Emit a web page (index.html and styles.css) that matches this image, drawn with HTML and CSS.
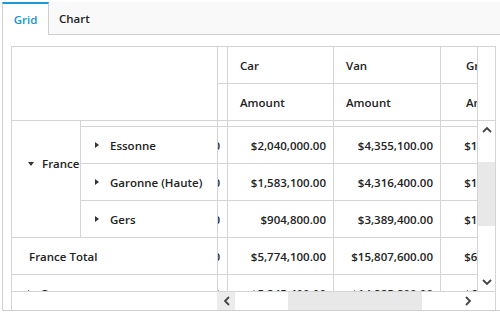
FILE: index.html
```html
<!DOCTYPE html>
<html lang="en">
<head>
    <meta charset="UTF-8">
    <meta name="viewport" content="width=device-width, initial-scale=1.0">
    <title>Pivot Grid</title>
    <link rel="stylesheet" href="styles.css">
</head>
<body>

<div class="tabbar">
    <div class="tab active">Grid</div>
    <div class="tab">Chart</div>
</div>

<div class="panel">
    <div class="pivot">

        <div class="head">
            <div class="corner"></div>
            <div class="view">
                <div class="cols">
                    <div class="hcell">Bus</div>
                    <div class="hcell">Car</div>
                    <div class="hcell">Van</div>
                    <div class="hcell total">Grand Total</div>
                    <div class="hcell">Amount</div>
                    <div class="hcell">Amount</div>
                    <div class="hcell">Amount</div>
                    <div class="hcell total">Amount</div>
                </div>
            </div>
            <div class="vhead"></div>
        </div>

        <div class="body">
            <div class="frozen">
                <div class="rows">
                    <div class="rh country span4"><span class="tri-down"></span>France</div>
                    <div class="rh state"><span class="tri-right"></span>Charente</div>
                    <div class="rh state"><span class="tri-right"></span>Essonne</div>
                    <div class="rh state"><span class="tri-right"></span>Garonne (Haute)</div>
                    <div class="rh state"><span class="tri-right"></span>Gers</div>
                    <div class="rh wide total-row">France Total</div>
                    <div class="rh wide country"><span class="tri-right"></span>Germany</div>
                </div>
            </div>
            <div class="view">
                <div class="cols values">
                    <div class="vc">$1,204,300.00</div>
                    <div class="vc">$1,865,200.00</div>
                    <div class="vc">$3,746,700.00</div>
                    <div class="vc">$11,816,200.00</div>

                    <div class="vc">$1,912,800.00</div>
                    <div class="vc">$2,040,000.00</div>
                    <div class="vc">$4,355,100.00</div>
                    <div class="vc">$13,307,900.00</div>

                    <div class="vc">$1,475,500.00</div>
                    <div class="vc">$1,583,100.00</div>
                    <div class="vc">$4,316,400.00</div>
                    <div class="vc">$14,375,000.00</div>

                    <div class="vc">$1,126,900.00</div>
                    <div class="vc">$904,800.00</div>
                    <div class="vc">$3,389,400.00</div>
                    <div class="vc">$10,421,100.00</div>

                    <div class="vc">$5,719,500.00</div>
                    <div class="vc">$5,774,100.00</div>
                    <div class="vc">$15,807,600.00</div>
                    <div class="vc">$67,920,200.00</div>

                    <div class="vc">$5,102,600.00</div>
                    <div class="vc">$5,245,400.00</div>
                    <div class="vc">$14,885,800.00</div>
                    <div class="vc">$64,330,100.00</div>
                </div>
            </div>
            <div class="vscroll">
                <div class="sb-btn up">
                    <svg width="10" height="7" viewBox="0 0 10 7"><polyline points="1,6 5,2 9,6" fill="none" stroke="#444" stroke-width="1.8"/></svg>
                </div>
                <div class="sb-track">
                    <div class="vthumb"></div>
                </div>
                <div class="sb-btn down">
                    <svg width="10" height="7" viewBox="0 0 10 7"><polyline points="1,1 5,5 9,1" fill="none" stroke="#444" stroke-width="1.8"/></svg>
                </div>
            </div>
        </div>

        <div class="foot">
            <div class="fblank"></div>
            <div class="hscroll">
                <div class="sb-btn left">
                    <svg width="7" height="10" viewBox="0 0 7 10"><polyline points="6,1 2,5 6,9" fill="none" stroke="#444" stroke-width="1.8"/></svg>
                </div>
                <div class="sb-track">
                    <div class="hthumb"></div>
                </div>
                <div class="sb-btn right">
                    <svg width="7" height="10" viewBox="0 0 7 10"><polyline points="1,1 5,5 1,9" fill="none" stroke="#444" stroke-width="1.8"/></svg>
                </div>
            </div>
            <div class="fcorner"></div>
        </div>

    </div>
</div>

</body>
</html>
```

FILE: styles.css
```css
* {
    box-sizing: border-box;
}

body {
    margin: 0;
    width: 500px;
    height: 315px;
    overflow: hidden;
    background-color: #fff;
    font-family: 'Open Sans', 'Noto Sans', sans-serif;
    font-size: 11.5px;
    font-weight: 600;
    color: #222;
}

/* tabs */
.tabbar {
    display: flex;
    align-items: flex-start;
    width: 510px;
    height: 33px;
    margin: 2px 0 0 2px;
    background-color: #f9f9f9;
    border-bottom: 1px solid #cfcfcf;
}

.tab {
    height: 32px;
    padding: 0 10px;
    display: flex;
    align-items: center;
}

.tab.active {
    width: 47px;
    height: 33px;
    justify-content: center;
    padding: 0;
    background-color: #fff;
    color: #1b8fd4;
    border-top: 2px solid #1a9ad6;
    border-left: 1px solid #cfcfcf;
    border-right: 1px solid #cfcfcf;
}

.panel {
    width: 510px;
    height: 276px;
    margin-left: 2px;
    padding: 11px 0 0 8px;
    border-left: 1px solid #cfcfcf;
    border-bottom: 1px solid #cfcfcf;
}

/* pivot grid */
.pivot {
    width: 485px;
    height: 264px;
    border: 1px solid #d4d4d4;
    border-bottom: none;
}

.head {
    display: flex;
    height: 74px;
}

.corner {
    width: 206px;
    border-right: 1px solid #d4d4d4;
    border-bottom: 1px solid #d4d4d4;
}

.view {
    width: 259px;
    overflow: hidden;
}

.cols {
    display: grid;
    grid-template-columns: 106px 106px 107px 113px;
    grid-auto-rows: 37px;
    width: 432px;
    margin-left: -96px;
}

.hcell {
    display: flex;
    align-items: center;
    padding-left: 12px;
    white-space: nowrap;
    overflow: hidden;
    border-right: 1px solid #d4d4d4;
    border-bottom: 1px solid #d4d4d4;
}

.hcell.total {
    padding-left: 25px;
}

.vhead {
    width: 18px;
    border-left: 1px solid #d4d4d4;
    border-bottom: 1px solid #d4d4d4;
}

.body {
    display: flex;
    height: 170px;
}

.frozen {
    width: 206px;
    overflow: hidden;
    border-right: 1px solid #d4d4d4;
}

.rows {
    display: grid;
    grid-template-columns: 69px 136px;
    grid-auto-rows: 37px;
    margin-top: -31px;
}

.rh {
    display: flex;
    align-items: center;
    white-space: nowrap;
    border-bottom: 1px solid #d4d4d4;
}

.rh.country {
    padding-left: 16px;
    gap: 8px;
}

.rh.span4 {
    grid-row: span 4;
    border-right: 1px solid #d4d4d4;
}

.rh.state {
    padding-left: 14px;
    gap: 11px;
}

.rh.wide {
    grid-column: span 2;
}

.rh.total-row {
    padding-left: 17px;
}

.tri-right {
    width: 0;
    height: 0;
    border-left: 4px solid #333;
    border-top: 3px solid transparent;
    border-bottom: 3px solid transparent;
}

.tri-down {
    width: 0;
    height: 0;
    border-top: 4px solid #333;
    border-left: 3px solid transparent;
    border-right: 3px solid transparent;
}

.values {
    margin-top: -31px;
}

.vc {
    display: flex;
    align-items: center;
    justify-content: flex-end;
    padding-right: 7px;
    white-space: nowrap;
    border-right: 1px solid #d4d4d4;
    border-bottom: 1px solid #d4d4d4;
}

/* scrollbars */
.vscroll {
    width: 18px;
    display: flex;
    flex-direction: column;
    border-left: 1px solid #d4d4d4;
}

.sb-btn {
    display: flex;
    align-items: center;
    justify-content: center;
}

.sb-btn.up {
    height: 17px;
}

.sb-btn.down {
    height: 18px;
}

.sb-track {
    flex: 1;
}

.vthumb {
    height: 64px;
    margin-top: 24px;
    background-color: #e8e8e8;
}

.foot {
    display: flex;
    height: 19px;
    border-top: 1px solid #d4d4d4;
}

.fblank {
    width: 205px;
}

.hscroll {
    width: 260px;
    display: flex;
}

.sb-btn.left {
    width: 18px;
    background-color: #ececec;
}

.sb-btn.right {
    width: 18px;
}

.hthumb {
    width: 134px;
    height: 100%;
    margin-left: 53px;
    background-color: #e8e8e8;
}

.fcorner {
    width: 18px;
}
```
